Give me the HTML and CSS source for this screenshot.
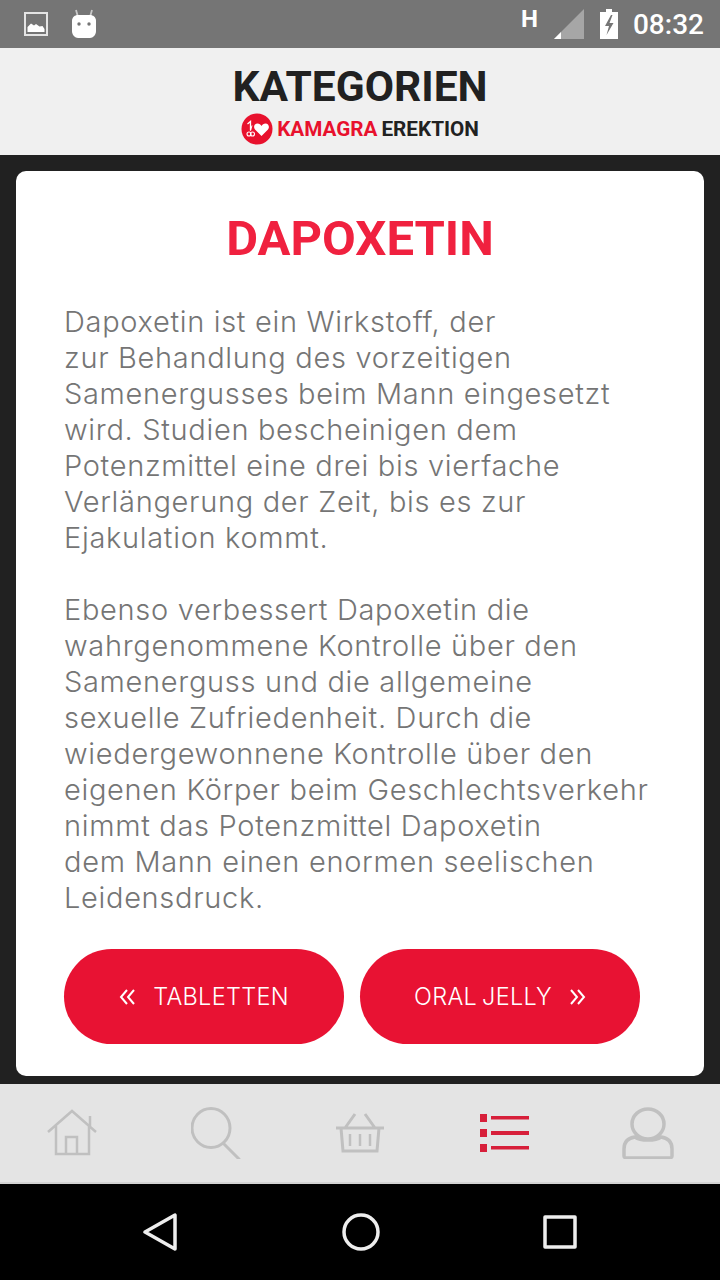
FILE: index.html
```html
<!DOCTYPE html>
<html lang="de">
<head>
    <meta charset="UTF-8">
    <meta name="viewport" content="width=device-width, initial-scale=1.0">
    <title>Dapoxetin</title>
    <link rel="stylesheet" href="styles.css">
</head>
<body>
    <div class="statusBar">
        <div class="statusLeft">
            <svg class="statusIcon" width="24" height="24" viewBox="0 0 24 24">
                <path d="M1 1h22v22H1z" fill="none" stroke="#e4e4e4" stroke-width="2"/>
                <path d="M3.500 20v-5l3.500-3.500 3 2 2-1.500 3.500 2.500 3-.5 2 3V20z" fill="#fff"/>
            </svg>
            <svg class="statusIcon" width="24" height="30" viewBox="0 0 24 30">
                <path d="M4 1l2 7M20 1l-2 7" stroke="#c8c8c8" stroke-width="1.800" fill="none"/>
                <path d="M6 6h12c3 0 6 2 6 6v10c0 4-3 7-6 7H6c-3 0-6-3-6-7V12c0-4 3-6 6-6z" fill="#fff"/>
                <circle cx="7" cy="15" r="1.700" fill="#757575"/>
                <circle cx="17" cy="15" r="1.700" fill="#757575"/>
            </svg>
        </div>
        <div class="statusRight">
            <span class="networkType">H</span>
            <svg class="signal" width="30" height="30" viewBox="0 0 30 30">
                <path d="M30 0v30H0z" fill="#a6a6a6"/>
                <path d="M7 23v7H0z" fill="#fff"/>
            </svg>
            <svg class="battery" width="18" height="30" viewBox="0 0 18 30">
                <path d="M6 0h6v3h6v27H0V3h6z" fill="#fff"/>
                <path d="M11 6l-6 11h4l-2.500 9 7-12h-4l3-8z" fill="#757575"/>
            </svg>
            <span class="clock">08:32</span>
        </div>
    </div>

    <div class="topBar">
        <h1>KATEGORIEN</h1>
        <div class="brand">
            <svg width="32" height="32" viewBox="0 0 32 32">
                <circle cx="16" cy="16" r="15.500" fill="#e8112d"/>
                <path d="M6.500 11l3-2.500v9" fill="none" stroke="#fff" stroke-width="1.300"/>
                <path d="M9.500 17.500l1.500-5" fill="none" stroke="#fff" stroke-width="1"/>
                <circle cx="8" cy="21" r="2" fill="none" stroke="#fff" stroke-width="1.100"/>
                <circle cx="11.500" cy="21" r="2" fill="none" stroke="#fff" stroke-width="1.100"/>
                <path d="M20.500 23l-6.500-6.500c-2-2.500-.5-6 2.500-6 1.800 0 3.200 1 4 2.500.8-1.500 2.200-2.500 4-2.500 3 0 4.500 3.500 2.500 6z" fill="#fff"/>
            </svg>
            <span class="brandRed">KAMAGRA</span>
            <span class="brandDark">EREKTION</span>
        </div>
    </div>

    <div class="content">
        <div class="card">
            <h2>DAPOXETIN</h2>
            <p>Dapoxetin ist ein Wirkstoff, der<br>zur Behandlung des vorzeitigen<br>Samenergusses beim Mann eingesetzt<br>wird. Studien bescheinigen dem<br>Potenzmittel eine drei bis vierfache<br>Verlängerung der Zeit, bis es zur<br>Ejakulation kommt.</p>
            <p>Ebenso verbessert Dapoxetin die<br>wahrgenommene Kontrolle über den<br>Samenerguss und die allgemeine<br>sexuelle Zufriedenheit. Durch die<br>wiedergewonnene Kontrolle über den<br>eigenen Körper beim Geschlechtsverkehr<br>nimmt das Potenzmittel Dapoxetin<br>dem Mann einen enormen seelischen<br>Leidensdruck.</p>
            <div class="buttons">
                <a class="pill">
                    <svg width="18" height="16" viewBox="0 0 18 16"><path d="M8 1L2 8l6 7M15 1L9 8l6 7" fill="none" stroke="#fff" stroke-width="2"/></svg>
                    <span>TABLETTEN</span>
                </a>
                <a class="pill">
                    <span>ORAL JELLY</span>
                    <svg width="18" height="16" viewBox="0 0 18 16"><path d="M3 1l6 7-6 7M10 1l6 7-6 7" fill="none" stroke="#fff" stroke-width="2"/></svg>
                </a>
            </div>
        </div>
    </div>

    <div class="tabBar">
        <svg width="52" height="50" viewBox="0 0 52 50" fill="none" stroke="#c0c0c0" stroke-width="2.500">
            <path d="M2 24L26 3l24 21M10 18v28h33V18M44 8v12M20 46V29h11v17"/>
        </svg>
        <svg width="52" height="52" viewBox="0 0 52 52" fill="none" stroke="#c0c0c0" stroke-width="3">
            <ellipse cx="20" cy="21" rx="19" ry="19.500"/>
            <path d="M33 37l15 15" stroke-linecap="round"/>
        </svg>
        <svg width="50" height="40" viewBox="1 0 50 40" fill="none" stroke="#c0c0c0" stroke-width="3">
            <path d="M1 15h48M6 15l2 23h34l2-23M10 15L20 1M40 15L30 1"/>
            <path d="M15 21v12M25 21v12M35 21v12" stroke-width="2.500"/>
        </svg>
        <svg width="50" height="38" viewBox="0 0 50 38" fill="#d71f3a">
            <path d="M1 0h7v8H1zM1 15h7v8H1zM1 30h7v8H1zM12 2h38v3.500H12zM12 17h38v4H12zM12 32h38v3.500H12z"/>
        </svg>
        <svg width="52" height="52" viewBox="0 0 52 52" fill="none" stroke="#c0c0c0" stroke-width="3.500">
            <ellipse cx="26" cy="17" rx="16" ry="15"/>
            <path d="M13 30c-7 1-11 5-11 12v7c0 1 1 2 2 2h44c1 0 2-1 2-2v-7c0-7-4-11-11-12-4 3-8 3-13 3s-9 0-13-3z"/>
        </svg>
    </div>

    <div class="navBar">
        <svg width="36" height="38" viewBox="0 0 36 38" fill="none" stroke="#eee" stroke-width="3.500" stroke-linejoin="round">
            <path d="M33 2v34L3 19z"/>
        </svg>
        <svg width="38" height="38" viewBox="0 0 38 38" fill="none" stroke="#eee" stroke-width="3.500">
            <circle cx="19" cy="19" r="17"/>
        </svg>
        <svg width="34" height="34" viewBox="0 0 34 34" fill="none" stroke="#eee" stroke-width="3.500" stroke-linejoin="round">
            <path d="M2 2h30v30H2z"/>
        </svg>
    </div>
</body>
</html>
```

FILE: styles.css
```css
* {
    box-sizing: border-box;
}
html, body {
    margin: 0;
    padding: 0;
}
body {
    width: 720px;
    height: 1280px;
    display: flex;
    flex-direction: column;
    overflow: hidden;
    background-color: #212121;
    font-family: 'Roboto', sans-serif;
}
.statusBar {
    height: 48px;
    background-color: #757575;
    display: flex;
    justify-content: space-between;
    align-items: center;
    padding: 0 16px 0 24px;
    color: white;
}
.statusLeft {
    display: flex;
    align-items: center;
    gap: 24px;
}
.statusRight {
    display: flex;
    align-items: center;
}
.networkType {
    font-size: 24px;
    font-weight: 700;
    margin-right: 16px;
    margin-bottom: 10px;
}
.signal {
    margin-right: 16px;
}
.battery {
    margin-right: 15px;
}
.clock {
    font-size: 28px;
    font-weight: 500;
}
.topBar {
    height: 107px;
    background-color: #f0f0f0;
    display: flex;
    flex-direction: column;
    align-items: center;
    padding-top: 16px;
}
h1 {
    margin: 0;
    font-size: 42.500px;
    line-height: 46px;
    font-weight: 700;
    color: #212121;
}
.brand {
    display: flex;
    align-items: center;
    margin-top: 3px;
    font-size: 20.700px;
    font-weight: 700;
}
.brand svg {
    margin-right: 4px;
}
.brandRed {
    color: #e8112d;
    margin-right: 4px;
}
.brandDark {
    color: #212121;
}
.content {
    height: 929px;
    padding: 16px 16px 8px;
}
.card {
    height: 905px;
    background-color: white;
    border-radius: 10px;
    padding: 39px 48px 0;
}
h2 {
    margin: 0 0 36px;
    text-align: center;
    font-size: 49px;
    line-height: 58px;
    font-weight: 700;
    color: #f0213f;
}
p {
    margin: 0 0 36px;
    font-family: 'Inter', sans-serif;
    font-weight: 300;
    font-size: 29px;
    letter-spacing: 0.680px;
    line-height: 36px;
    color: #757575;
    white-space: nowrap;
}
.buttons {
    display: flex;
    gap: 16px;
    margin-top: -3px;
}
.pill {
    width: 280px;
    height: 95px;
    border-radius: 48px;
    background-color: #e81233;
    color: white;
    display: flex;
    align-items: center;
    justify-content: center;
    gap: 16px;
    font-family: 'Inter', sans-serif;
    font-weight: 300;
    font-size: 23.500px;
    letter-spacing: 0.300px;
    word-spacing: -2px;
}
.tabBar {
    height: 100px;
    background-color: #e4e4e4;
    border-bottom: 2px solid #d4d4d4;
    display: flex;
    justify-content: space-between;
    align-items: center;
    padding: 0 46px;
}
.navBar {
    height: 96px;
    background-color: black;
    display: flex;
    justify-content: space-between;
    align-items: center;
    padding: 0 143px 0 142px;
}
```
